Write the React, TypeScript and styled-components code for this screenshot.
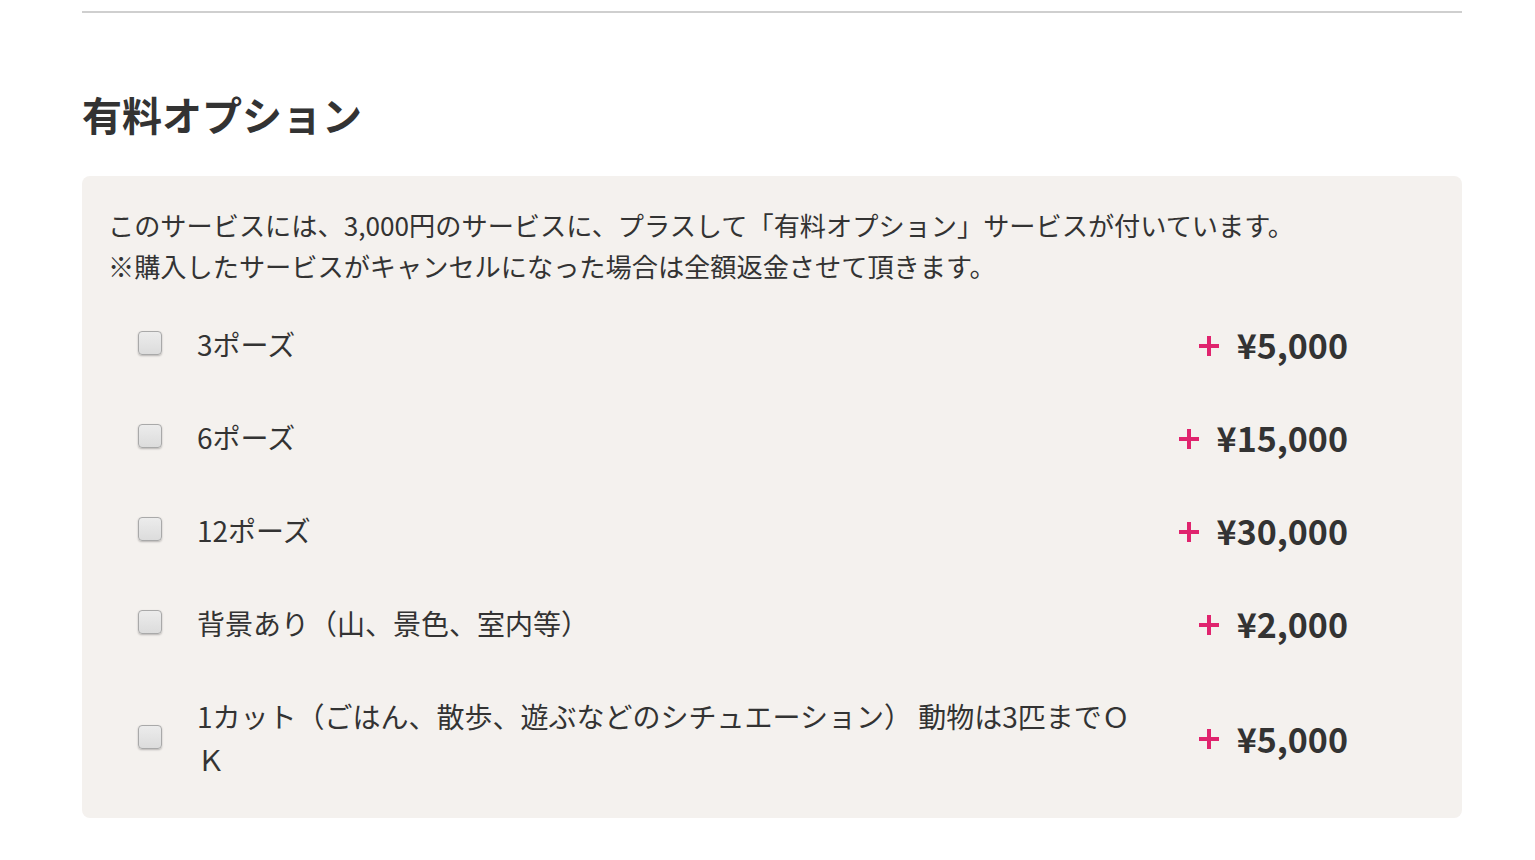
import React from "react"
import styled, { createGlobalStyle } from "styled-components"

const GlobalStyle = createGlobalStyle`
  html, body {
    margin: 0;
    padding: 0;
    background: #fff;
  }
  body {
    font-family: "Noto Sans CJK JP", "Noto Sans", sans-serif;
    color: #333;
  }
`

interface Option {
  label: string
  price: string
}

const options: Option[] = [
  { label: "3ポーズ", price: "¥5,000" },
  { label: "6ポーズ", price: "¥15,000" },
  { label: "12ポーズ", price: "¥30,000" },
  { label: "背景あり（山、景色、室内等）", price: "¥2,000" },
  { label: "1カット（ごはん、散歩、遊ぶなどのシチュエーション） 動物は3匹までＯＫ", price: "¥5,000" },
]

export default function App() {
  return (
    <S.Page>
      <GlobalStyle />
      <S.Divider />
      <S.Title>有料オプション</S.Title>
      <S.Panel>
        <S.Intro>
          このサービスには、3,000円のサービスに、プラスして「有料オプション」サービスが付いています。
          <br />
          ※購入したサービスがキャンセルになった場合は全額返金させて頂きます。
        </S.Intro>
        <S.List>
          {options.map((option, index) => (
            <S.Row key={index}>
              <S.Check />
              <S.Label>{option.label}</S.Label>
              <S.Price>
                <S.Plus />
                {option.price}
              </S.Price>
            </S.Row>
          ))}
        </S.List>
      </S.Panel>
    </S.Page>
  )
}

const S = {
  Page: styled.div`
    width: 1380px;
    margin: 0 auto 0 82px;
    padding-top: 11px;
  `,

  Divider: styled.div`
    height: 2px;
    background: #cfcfcf;
  `,

  Title: styled.h2`
    margin: 73px 0 34px;
    font-size: 40px;
    line-height: 56px;
    font-weight: 700;
    color: #333;
  `,

  Panel: styled.div`
    background: #f4f1ee;
    border-radius: 8px;
    padding: 29px 114px 12px 26px;
  `,

  Intro: styled.p`
    margin: 0 0 11px;
    font-size: 26.2px;
    line-height: 41px;
    color: #333;
  `,

  List: styled.div`
    display: flex;
    flex-direction: column;
  `,

  Row: styled.label`
    display: flex;
    align-items: center;
    padding: 25px 0;
  `,

  Check: styled.span`
    flex: none;
    width: 22px;
    height: 22px;
    margin-left: 30px;
    margin-right: 35px;
    margin-top: -3px;
    border: 1px solid #a9a9a9;
    border-radius: 4px;
    background: linear-gradient(#ececec, #dcdcdc);
    box-shadow: 0 1px 2px rgba(0, 0, 0, 0.25);
  `,

  Label: styled.span`
    flex: 1;
    padding-right: 26px;
    font-size: 28px;
    line-height: 43px;
    color: #333;
  `,

  Price: styled.span`
    flex: none;
    display: flex;
    align-items: center;
    justify-content: flex-end;
    min-width: 180px;
    font-size: 34px;
    line-height: 43px;
    font-weight: 700;
    color: #333;
    white-space: nowrap;
  `,

  Plus: styled.span`
    position: relative;
    width: 20px;
    height: 20px;
    margin-right: 18px;
    margin-top: 2px;

    &::before,
    &::after {
      content: "";
      position: absolute;
      background: #e0246e;
    }
    &::before {
      left: 0;
      right: 0;
      top: 8px;
      height: 4px;
    }
    &::after {
      top: 0;
      bottom: 0;
      left: 8px;
      width: 4px;
    }
  `,
}
